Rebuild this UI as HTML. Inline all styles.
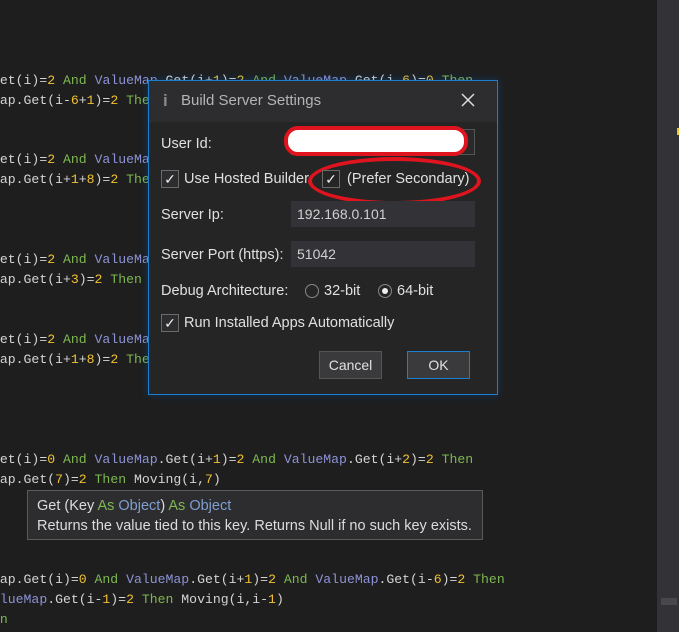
<!DOCTYPE html><html><head><style>
body{margin:0;width:679px;height:632px;background:#1e1e1e;overflow:hidden;position:relative;font-family:"Liberation Sans",sans-serif}
.c{position:absolute;font-family:"Liberation Mono",monospace;font-size:13.15px;color:#d4d4d4;white-space:pre;line-height:20px}
.k{color:#7cb850}.v{color:#8d93d6}.n{color:#f1c232}
.sb{position:absolute;left:657px;top:0;width:22px;height:632px;background:#333337}
.dlg{position:absolute;left:148px;top:80px;width:348px;height:313px;border:1px solid #1a7fd0;background:#252526;box-shadow:0 0 8px rgba(0,100,200,.35)}
.tb{height:41px;background:#2d2d30;color:#a8a8a8;font-size:15px}
.t{position:absolute;color:#e0e0e0;font-size:14.5px}
.in{position:absolute;left:142px;width:184px;height:26px;background:#333337;color:#d0d0d0;font-size:14px;line-height:26px;padding-left:6px;box-sizing:border-box}
.cb{position:absolute;width:16px;height:16px;border:1px solid #6a6a6a;background:#2d2d30;color:#eee;font-size:14px;line-height:16px;text-align:center}
.btn{position:absolute;height:26px;border:1px solid #555;background:#3a3a3d;color:#e0e0e0;font-size:14px;text-align:center;line-height:26px}
</style></head><body>
<div class="c" style="left:-8px;top:71px">G<span>et(i)=</span><span class="n">2</span> <span class="k">And</span> <span class="v">ValueMap</span>.Get(i+<span class="n">1</span>)=<span class="n">2</span> <span class="k">And</span> <span class="v">ValueMap</span>.Get(i-<span class="n">6</span>)=<span class="n">0</span> <span class="k">Then</span></div>
<div class="c" style="left:-8px;top:91px">Map.Get(i-<span class="n">6</span>+<span class="n">1</span>)=<span class="n">2</span> <span class="k">Then</span></div>
<div class="c" style="left:-8px;top:150px">Get(i)=<span class="n">2</span> <span class="k">And</span> <span class="v">ValueMap</span></div>
<div class="c" style="left:-8px;top:170px">Map.Get(i+<span class="n">1</span>+<span class="n">8</span>)=<span class="n">2</span> <span class="k">Then</span></div>
<div class="c" style="left:-8px;top:250px">Get(i)=<span class="n">2</span> <span class="k">And</span> <span class="v">ValueMap</span></div>
<div class="c" style="left:-8px;top:270px">Map.Get(i+<span class="n">3</span>)=<span class="n">2</span> <span class="k">Then</span></div>
<div class="c" style="left:-8px;top:330px">Get(i)=<span class="n">2</span> <span class="k">And</span> <span class="v">ValueMap</span></div>
<div class="c" style="left:-8px;top:350px">Map.Get(i+<span class="n">1</span>+<span class="n">8</span>)=<span class="n">2</span> <span class="k">Then</span></div>
<div class="c" style="left:-8px;top:450px">Get(i)=<span class="n">0</span> <span class="k">And</span> <span class="v">ValueMap</span>.Get(i+<span class="n">1</span>)=<span class="n">2</span> <span class="k">And</span> <span class="v">ValueMap</span>.Get(i+<span class="n">2</span>)=<span class="n">2</span> <span class="k">Then</span></div>
<div class="c" style="left:-8px;top:470px">Map.Get(<span class="n">7</span>)=<span class="n">2</span> <span class="k">Then</span> Moving(i,<span class="n">7</span>)</div>
<div class="c" style="left:-8px;top:570px">Map.Get(i)=<span class="n">0</span> <span class="k">And</span> <span class="v">ValueMap</span>.Get(i+<span class="n">1</span>)=<span class="n">2</span> <span class="k">And</span> <span class="v">ValueMap</span>.Get(i-<span class="n">6</span>)=<span class="n">2</span> <span class="k">Then</span></div>
<div class="c" style="left:-8px;top:590px"><span class="v">alueMap</span>.Get(i-<span class="n">1</span>)=<span class="n">2</span> <span class="k">Then</span> Moving(i,i-<span class="n">1</span>)</div>
<div class="c" style="left:-8px;top:610px"><span class="k">en</span></div>
<div class="sb"></div>
<div style="position:absolute;left:661px;top:598px;width:16px;height:7px;background:#48484b"></div>
<div style="position:absolute;left:677px;top:128px;width:2px;height:7px;background:#f1c232"></div>
<div style="position:absolute;left:27px;top:490px;width:456px;height:50px;background:#2d2d30;border:1px solid #5a5a5a;font-size:14.5px;color:#dcdcdc;line-height:20px;padding:5px 0 0 9px;box-sizing:border-box">Get (Key <span class="k">As</span> <span style="color:#7f9fd0">Object</span>) <span class="k">As</span> <span style="color:#7f9fd0">Object</span><br>Returns the value tied to this key. Returns Null if no such key exists.</div>
<div class="dlg">
<div class="tb"><span style="position:absolute;left:14px;top:10px;font-weight:bold;color:#888;font-size:17px">i</span><span style="position:absolute;left:32px;top:11px;color:#b4b4b4">Build Server Settings</span><svg style="position:absolute;left:312px;top:12px" width="14" height="14"><path d="M1 1L13 13M13 1L1 13" stroke="#ddd" stroke-width="1.5"/></svg></div>
<div class="t" style="left:12px;top:55px">User Id:</div>
<div class="in" style="top:48px;border:1px solid #555;background:#2a2a2a"></div>
<div style="position:absolute;left:135px;top:45px;width:184px;height:30px;border:4px solid #e0141e;border-radius:14px;background:#fff;box-sizing:border-box"></div>
<div class="cb" style="left:12px;top:89px">✓</div><div class="t" style="left:35px;top:90px">Use Hosted Builder</div>
<div style="position:absolute;left:159px;top:76px;width:173px;height:48px;border:4px solid #e0141e;border-radius:50%;box-sizing:border-box"></div>
<div class="cb" style="left:173px;top:89px;background:#252526">✓</div><div class="t" style="left:198px;top:90px">(Prefer Secondary)</div>
<div class="t" style="left:12px;top:126px">Server Ip:</div><div class="in" style="top:120px">192.168.0.101</div>
<div class="t" style="left:12px;top:166px">Server Port (https):</div><div class="in" style="top:160px">51042</div>
<div class="t" style="left:12px;top:202px">Debug Architecture:</div>
<div style="position:absolute;left:156px;top:203px;width:12px;height:12px;border:1px solid #888;border-radius:50%"></div><div class="t" style="left:175px;top:202px">32-bit</div>
<div style="position:absolute;left:229px;top:203px;width:12px;height:12px;border:1px solid #888;border-radius:50%"><div style="margin:3px;width:6px;height:6px;border-radius:50%;background:#eee"></div></div><div class="t" style="left:248px;top:202px">64-bit</div>
<div class="cb" style="left:12px;top:233px">✓</div><div class="t" style="left:35px;top:234px">Run Installed Apps Automatically</div>
<div class="btn" style="left:170px;top:270px;width:61px">Cancel</div>
<div class="btn" style="left:258px;top:270px;width:61px;border-color:#1a7fd0">OK</div>
</div>
</body></html>
